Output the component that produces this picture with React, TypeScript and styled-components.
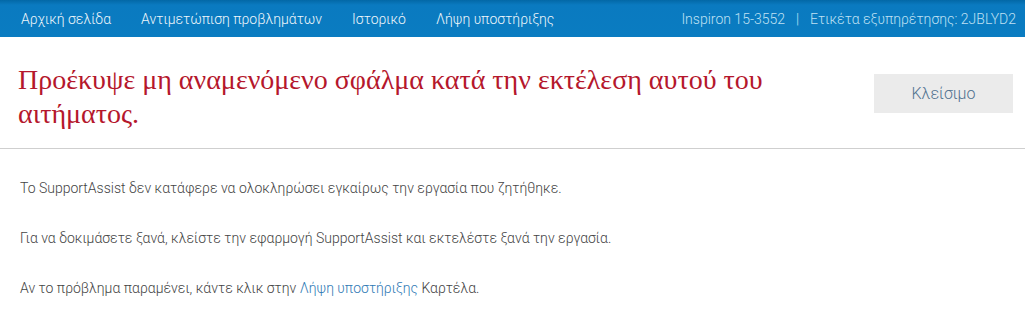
import React from "react";
import styled, { createGlobalStyle } from "styled-components";

const Global = createGlobalStyle`
  html, body { margin: 0; padding: 0; background: #ffffff; }
  body { font-family: Roboto, "Noto Sans", sans-serif; }
  * { box-sizing: border-box; }
`;

const Page = styled.div`
  width: 1025px;
  height: 315px;
  overflow: hidden;
  background: #fff;
`;

const NavBar = styled.nav`
  height: 37px;
  display: flex;
  align-items: center;
  justify-content: space-between;
  padding: 0 9px 0 21px;
  background: linear-gradient(to bottom, #0368a6 0px, #0a7ac0 5px, #0a7cc1 100%);
  color: #e6f2fa;
  font-size: 14px;
  font-weight: 300;
`;

const NavLinks = styled.div`
  display: flex;
  gap: 30px;
`;

const NavLink = styled.span`
  color: #eef6fb;
  white-space: nowrap;
`;

const DeviceInfo = styled.div`
  color: #bfe0f3;
  white-space: nowrap;
  display: flex;
  gap: 11px;
`;

const Header = styled.header`
  display: flex;
  justify-content: space-between;
  align-items: flex-start;
  padding: 26px 12px 17px 18px;
  border-bottom: 1px solid #cfcfcf;
`;

const Title = styled.h1`
  margin: 0;
  width: 790px;
  font-family: "Liberation Serif", "DejaVu Serif", serif;
  font-weight: 400;
  font-size: 28px;
  line-height: 34px;
  color: #b5172c;
`;

const CloseButton = styled.button`
  margin-top: 11px;
  width: 139px;
  height: 39px;
  border: none;
  background: #ebebeb;
  color: #50718f;
  font-family: Roboto, "Noto Sans", sans-serif;
  font-size: 16px;
  font-weight: 300;
  cursor: pointer;
`;

const Body = styled.section`
  display: flex;
  flex-direction: column;
  gap: 33px;
  padding: 31px 20px 0 20px;
`;

const Para = styled.p`
  margin: 0;
  font-size: 14px;
  line-height: 17px;
  font-weight: 300;
  color: #444;
`;

const Link = styled.a`
  color: #2f7ab5;
  text-decoration: none;
`;

export default function App() {
  return (
    <Page>
      <Global />
      <NavBar>
        <NavLinks>
          <NavLink>Αρχική σελίδα</NavLink>
          <NavLink>Αντιμετώπιση προβλημάτων</NavLink>
          <NavLink>Ιστορικό</NavLink>
          <NavLink>Λήψη υποστήριξης</NavLink>
        </NavLinks>
        <DeviceInfo>
          <span>Inspiron 15-3552</span>
          <span>|</span>
          <span>Ετικέτα εξυπηρέτησης: 2JBLYD2</span>
        </DeviceInfo>
      </NavBar>
      <Header>
        <Title>Προέκυψε μη αναμενόμενο σφάλμα κατά την εκτέλεση αυτού του αιτήματος.</Title>
        <CloseButton>Κλείσιμο</CloseButton>
      </Header>
      <Body>
        <Para>Το SupportAssist δεν κατάφερε να ολοκληρώσει εγκαίρως την εργασία που ζητήθηκε.</Para>
        <Para>Για να δοκιμάσετε ξανά, κλείστε την εφαρμογή SupportAssist και εκτελέστε ξανά την εργασία.</Para>
        <Para>
          Αν το πρόβλημα παραμένει, κάντε κλικ στην <Link href="#">Λήψη υποστήριξης</Link> Καρτέλα.
        </Para>
      </Body>
    </Page>
  );
}
